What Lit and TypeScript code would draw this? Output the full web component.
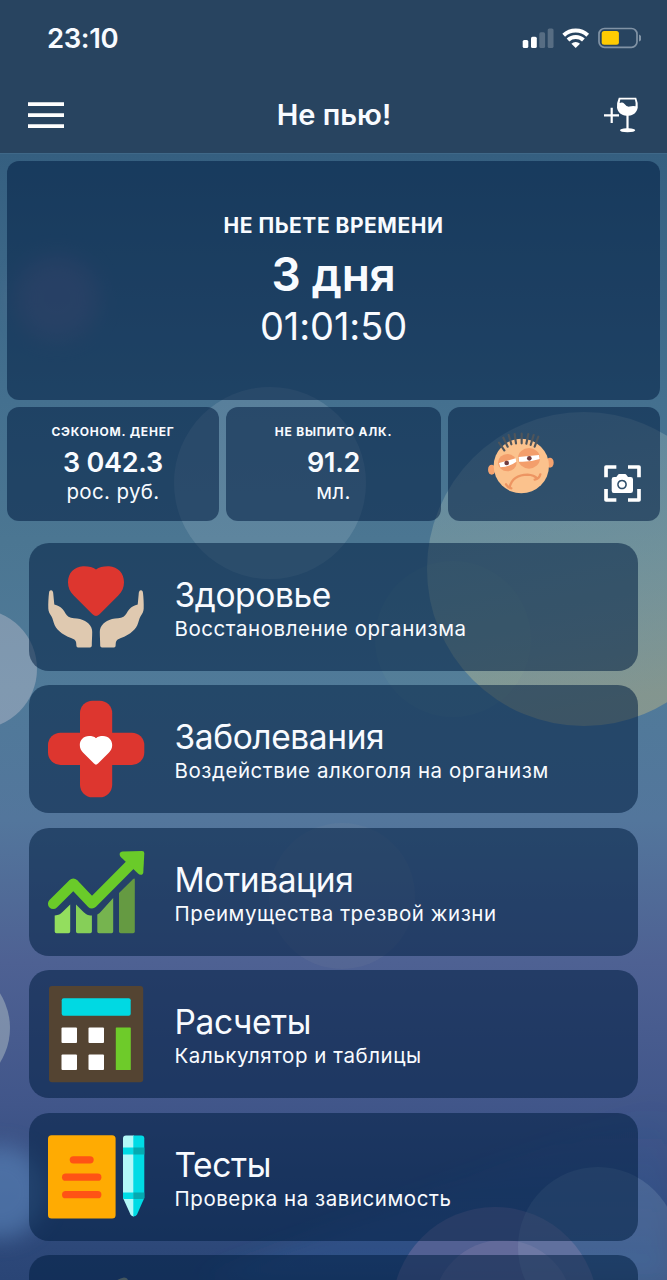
import { LitElement, html, svg, css } from "lit";
import { customElement, property } from "lit/decorators.js";

const hand =
  "M3 31.200C4.800 31.200 5.200 33 5.300 35L6.300 45.500C9.500 46.500 12.500 47.800 14.700 50.200C17 53 18 56 20.500 57.700C23.500 59.600 28 59 32 59.900C36 61 38.500 62.500 40.500 64.500C43 67 44.300 70 44.200 73C44.200 78 43.800 82 43.800 86.800Q43.700 88.400 42 88.400H30Q28.400 88.400 28.400 86.800C28.200 84 28.300 82 26.300 80.600C22 78.300 17.500 77 13.700 74.200C10.500 71.800 8.200 69.500 6.700 66.300C5.200 62.500 5 60 3.400 57.200C1.500 54.500 .4 52.500 .3 49.500C.1 44 .5 38.500 1 34C1.200 32.200 1.700 31.200 3 31.200Z";

const icons: Record<string, unknown> = {
  health: svg`
    <path fill="#dd362f" d="M48 10.500C51 8 56 7 61 7.200C70 7.700 76 14.200 76 23.200C76 28.700 74 32.700 70.500 36.200L51.500 55.200Q48 58.700 44.500 55.200L25.500 36.200C22 32.700 20 28.700 20 23.200C20 14.200 26 7.700 35 7.200C40 7 45 8 48 10.500Z"/>
    <path fill="#dfc9b0" d=${hand}/>
    <path fill="#dfc9b0" transform="matrix(-1 0 0 1 96 0)" d=${hand}/>`,
  disease: svg`
    <rect fill="#dd362f" x="32" y="-.3" width="32.200" height="96.600" rx="12.500"/>
    <rect fill="#dd362f" x="0" y="31.700" width="96.300" height="32.300" rx="12.500"/>
    <path fill="#fff" d="M48 37.200C50 35.400 52 35 55 35C60.500 35 64.200 39 64.200 44C64.200 47.500 63 49.500 60.800 51.700L50 62.500Q48 64.800 46 62.500L35.200 51.700C33 49.500 31.800 47.500 31.800 44C31.800 39 35.500 35 41 35C44 35 46 35.400 48 37.200Z"/>`,
  motivation: svg`
    <path fill="#93de5e" d="M6.700 71.500C11 71 12 70.500 14.500 68L22.200 60.500V87.500Q22.200 89.200 20.500 89.200H8.400Q6.700 89.200 6.700 87.500Z"/>
    <path fill="#86cf58" d="M28 60.500L35 67.500C38 70.500 39.500 71.300 43.900 71.500V87.500Q43.900 89.200 42.200 89.200H29.700Q28 89.200 28 87.500Z"/>
    <path fill="#76b44f" d="M49.300 70.500Q51.500 69.500 53 67.500L65.200 54V87.500Q65.200 89.200 63.500 89.200H51Q49.300 89.200 49.300 87.500Z"/>
    <path fill="#659a42" d="M71 49L85 35.200Q86.800 33.500 86.800 36V87.500Q86.800 89.200 85.100 89.200H72.700Q71 89.200 71 87.500Z"/>
    <path fill="none" stroke="#6acb29" stroke-width="10.500" stroke-linecap="round" stroke-linejoin="round" d="M5.200 59.800L25.300 39.700L44 59.300L86 17"/>
    <path fill="#6acb29" d="M74.500 7.500L94 7Q96.400 7 96.300 9.300L95.300 28.200C95 31.200 92 31.400 90 29.500L73.300 13.500C70.500 10.700 71.500 7.700 74.500 7.500Z"/>`,
  calc: svg`
    <rect x="1" y="0" width="94.200" height="96.200" rx="3" fill="#544432"/>
    <rect x="13.700" y="12.200" width="69" height="17.600" rx="2" fill="#00d9e3"/>
    <g fill="#fff"><rect x="13.500" y="41.400" width="15.500" height="15.600" rx="1"/><rect x="40.500" y="41.400" width="15.500" height="15.600" rx="1"/><rect x="13.500" y="68.600" width="15.500" height="15.500" rx="1"/><rect x="40.500" y="68.600" width="15.500" height="15.500" rx="1"/></g>
    <rect x="67.800" y="41.400" width="15" height="42.700" rx=".6" fill="#6ecb2a"/>`,
  tests: svg`
    <rect x="0" y="6.200" width="67.600" height="83.300" rx="3.500" fill="#ffab02"/>
    <g fill="#ff5315"><rect x="21.700" y="27.200" width="24" height="7.300" rx="3.650"/><rect x="14" y="44.500" width="39.400" height="7.300" rx="3.650"/><rect x="14" y="62" width="39.400" height="7.300" rx="3.650"/></g>
    <path fill="#b2f8f8" d="M86 6.500H78Q75 6.500 75 9.500V69L82.500 85.500Q83.500 87.500 86 87.500Z"/>
    <path fill="#00dbe5" d="M85.300 6.500H93.300Q96.300 6.500 96.300 9.500V69L89 85.500Q88 87.500 85.300 87.500Z"/>
    <path fill="#00dbe5" d="M75 18.600H85.300V25.500H75ZM75 63.600H85.300V70H75.500L75 69Z"/>
    <path fill="#05a9b0" d="M85.300 18.600H96.300V25.500H85.300ZM85.300 63.600H96.300V69L95.900 70H85.300Z"/>`,
  next: svg`<path fill="#44565f" d="M64 13Q69 8 76 6.500Q80 6.500 80 10V40H64Z"/>`,
};

@customElement("menu-card")
export class MenuCard extends LitElement {
  @property() icon = "";
  @property() heading = "";
  @property() note = "";
  static styles = css`
    :host { display: flex; box-sizing: border-box; height: 128px; padding: 16px 20px 16px 19.500px; gap: 30.500px; border-radius: 20px; background: rgba(0, 30, 64, 0.54); flex: none; overflow: hidden; }
    .icon { width: 96px; height: 96px; flex: none; overflow: visible; }
    .text { display: flex; flex-direction: column; padding-top: 14px; white-space: nowrap; }
    .heading { font-size: 33.500px; line-height: 44px; letter-spacing: -0.4px; }
    .note { font-size: 20.500px; line-height: 26px; letter-spacing: 0.55px; margin-top: -1px; }
  `;
  render() {
    return html`<svg class="icon" viewBox="0 0 96 96">${icons[this.icon]}</svg>
      <div class="text"><span class="heading">${this.heading}</span><span class="note">${this.note}</span></div>`;
  }
}

@customElement("app-root")
export class AppRoot extends LitElement {
  static styles = css`
    :host { display: block; position: relative; height: 1280px; overflow: hidden; color: #f8fbff; font-family: Inter, "Noto Sans", sans-serif;
      background: linear-gradient(#305b7c 0, #355f80 155px, #44708f 400px, #4b7692 540px, #507a99 690px, #53769c 820px, #4e6193 962px, #41568a 1105px, #2d4879 1247px, #2a4576 1280px); }
    .backdrop { position: absolute; inset: 0; width: 667px; height: 1280px; }
    .page { position: relative; display: flex; flex-direction: column; }
    header { box-sizing: border-box; height: 154px; background: #284460; border-bottom: 1px solid #3f6888; display: flex; flex-direction: column; }
    .status { height: 76px; display: flex; align-items: center; justify-content: space-between; padding: 0 26px 0 47px; box-sizing: border-box; }
    .clock { font-size: 27.500px; font-weight: 600; letter-spacing: -0.4px; }
    .signals { width: 120px; height: 22px; }
    .nav { height: 77px; display: grid; grid-template-columns: 80px 1fr 80px; align-items: center; padding: 0 27px 0 28px; }
    .burger { width: 36px; height: 26px; }
    .title { text-align: center; font-size: 29px; font-weight: 600; letter-spacing: 0; }
    .glass { width: 36px; height: 36px; justify-self: end; }
    .panel { background: rgba(0, 28, 64, 0.54); border-radius: 12px; display: flex; flex-direction: column; align-items: center; white-space: nowrap; box-sizing: border-box; }
    .timer { margin: 7px 7px 0; height: 239px; padding-top: 51px; }
    .label { font-size: 21px; line-height: 28px; font-weight: 700; letter-spacing: 0.5px; }
    .days { font-size: 46px; line-height: 60px; font-weight: 600; margin-top: 4px; letter-spacing: -0.3px; }
    .hours { font-size: 38px; line-height: 44px; letter-spacing: -0.1px; }
    .stats { display: grid; grid-template-columns: 212px 215px 212px; gap: 7px; padding: 7px 7px 0; }
    .stat { height: 114px; padding-top: 16px; }
    .cap { font-size: 12px; line-height: 18px; font-weight: 700; letter-spacing: 0.8px; }
    .value { font-size: 27px; line-height: 34px; font-weight: 600; margin-top: 5px; letter-spacing: -0.25px; }
    .unit { font-size: 20.500px; line-height: 24px; letter-spacing: 0.35px; margin-top: -0.500px; }
    .mood { flex-direction: row; align-items: flex-start; justify-content: space-between; padding: 24.500px 18px 0 38.700px; }
    .face { width: 68px; height: 63.300px; }
    .scan { width: 38.700px; height: 39.300px; margin-top: 32px; }
    .menu { display: flex; flex-direction: column; gap: 14.500px; padding: 21.500px 29px 0 28.500px; }
  `;

  backdrop() {
    return svg`
      <defs>
        <linearGradient id="sun" x1="0" y1="0" x2="0.2" y2="1"><stop offset="0" stop-color="#b8d2d4" stop-opacity=".22"/><stop offset=".55" stop-color="#c3cfb0" stop-opacity=".3"/><stop offset="1" stop-color="#d0bf80" stop-opacity=".4"/></linearGradient>
        <linearGradient id="dusk" x1="0" y1="0" x2="0" y2="1"><stop offset="0" stop-color="#3569b0" stop-opacity="0"/><stop offset="1" stop-color="#3569b0" stop-opacity=".28"/></linearGradient>
        <filter id="soft" x="-50%" y="-50%" width="200%" height="200%"><feGaussianBlur stdDeviation="11"/></filter>
      </defs>
      <path d="M667 1100V1280H200Z" fill="url(#dusk)" filter="url(#soft)"/>
      <circle cx="57" cy="298" r="42" fill="#78729c" opacity=".42" filter="url(#soft)"/>
      <circle cx="270" cy="483" r="96" fill="#fff" opacity=".11"/>
      <circle cx="584" cy="569" r="157" fill="url(#sun)"/>
      <circle cx="453" cy="639" r="78" fill="#b9d0a0" opacity=".05"/>
      <circle cx="-23" cy="669" r="60" fill="#d3cdd8" opacity=".37"/>
      <circle cx="-55" cy="1028" r="65" fill="#c4d2cf" opacity=".42"/>
      <circle cx="0" cy="1192" r="46" fill="#5a85bb" opacity=".6" filter="url(#soft)"/>
      <circle cx="342" cy="896" r="73" fill="#a8a0a0" opacity=".08"/>
      <circle cx="495" cy="1310" r="103" fill="#b08bb8" opacity=".28"/>
      <circle cx="503" cy="1310" r="70" fill="#c6a8c8" opacity=".14"/>
      <circle cx="598" cy="1247" r="80" fill="#9bb4cc" opacity=".2"/>`;
  }

  face() {
    return html`<svg class="face" viewBox="140 95 204 190">
      <ellipse cx="154" cy="208" rx="11" ry="15" fill="#f5a36f"/><ellipse cx="329" cy="187" rx="11" ry="15" fill="#f5a36f"/>
      <ellipse cx="243" cy="197" rx="83" ry="82" fill="#fbc28d"/>
      <ellipse cx="201" cy="187" rx="28" ry="26" fill="#f39e6b"/><ellipse cx="266" cy="174" rx="33" ry="31" fill="#f39e6b"/>
      <path d="M176 188L226 174L228 184Q207 200 180 201ZM235 170L296 164L298 176Q268 186 236 184Z" fill="#fff"/>
      <circle cx="199" cy="188" r="7" fill="#713c3e"/><circle cx="267" cy="174" r="7" fill="#713c3e"/>
      <path d="M208 260Q217 224 262 223Q281 224 291 235M197 252Q203 262 213 264M283 238Q297 236 300 222" fill="none" stroke="#ed9562" stroke-width="7" stroke-linecap="round"/>
      <path d="M192 150L176 127M202 139L189 112M213 132L205 104M227 129L223 101M244 129V100M258 130L264 101M271 134L280 104M283 139L294 109" fill="none" stroke="#4f555b" stroke-width="6.500" stroke-linecap="round"/>
    </svg>`;
  }

  render() {
    return html`
      <svg class="backdrop" viewBox="0 0 667 1280">${this.backdrop()}</svg>
      <div class="page">
        <header>
          <div class="status">
            <span class="clock">23:10</span>
            <svg class="signals" viewBox="0 0 120 22">
              <g fill="#fff"><rect x="1.700" y="13" width="5.600" height="8" rx="1.600"/><rect x="10" y="9.700" width="5.800" height="11.300" rx="1.600"/></g>
              <g fill="#fff" opacity=".22"><rect x="18.300" y="5.300" width="5.800" height="15.700" rx="1.600"/><rect x="26.700" y="1.500" width="5.800" height="19.500" rx="1.600"/></g>
              <g fill="none" stroke="#fff" stroke-width="4"><path d="M42.700 8.300A17.500 17.500 0 0 1 66.700 8.300"/><path d="M47 13A11.300 11.300 0 0 1 62.400 13"/></g>
              <path fill="#fff" d="M50.400 16.800A6.300 6.300 0 0 1 59 16.800L54.700 21Z"/>
              <rect x="78" y="1.500" width="38" height="18.800" rx="5.500" fill="none" stroke="#8193a5" stroke-width="1.700"/>
              <rect x="80.700" y="4" width="17.200" height="13.800" rx="2.500" fill="#ffcc02"/>
              <path fill="#8193a5" d="M118 7.500Q120.500 8.500 120.500 11T118 14.500Z"/>
            </svg>
          </div>
          <div class="nav">
            <svg class="burger" viewBox="0 0 36 26"><path stroke="#fff" stroke-width="3.800" d="M0 2.200H36M0 13.200H36M0 24.200H36"/></svg>
            <span class="title">Не пью!</span>
            <svg class="glass" viewBox="0 0 36 36">
              <path d="M0 18.300H15M7.700 10.800V26" stroke="#fff" stroke-width="2.200"/>
              <path fill="#fff" fill-rule="evenodd" d="M14.800 .7H32.200Q34.300 6 33.700 10.700C32.700 15.500 29.500 18.300 24.600 18.800V31.200Q31 31.700 31.200 33.300Q31 35.200 23.500 35.200T16 33.300Q16.200 31.700 22.400 31.200V18.800C17.500 18.300 14 15.500 13 10.700Q12.500 6 14.800 .7ZM16.300 2.600L15.600 6Q18.500 4.500 20.300 6.800Q22.500 10 25.500 9.600Q28.500 8.500 31.500 9.200Q32 6 30.900 2.600Z"/>
            </svg>
          </div>
        </header>
        <section class="panel timer">
          <span class="label">НЕ ПЬЕТЕ ВРЕМЕНИ</span>
          <span class="days">3 дня</span>
          <span class="hours">01:01:50</span>
        </section>
        <section class="stats">
          <div class="panel stat"><span class="cap">СЭКОНОМ. ДЕНЕГ</span><span class="value">3 042.3</span><span class="unit">рос. руб.</span></div>
          <div class="panel stat"><span class="cap">НЕ ВЫПИТО АЛК.</span><span class="value">91.2</span><span class="unit">мл.</span></div>
          <div class="panel stat mood">
            ${this.face()}
            <svg class="scan" viewBox="490 192 116 118">
              <path fill="none" stroke="#fff" stroke-width="11" stroke-linejoin="round" d="M499 232V201H530M565 201H598V232M598 267V300H565M530 300H499V267"/>
              <path fill="#fff" fill-rule="evenodd" d="M523 231H530L535 224Q536 222 539 222H556Q559 222 560 224L565 231H573Q580 231 580 238V272Q580 279 573 279H522Q516 279 516 272V238Q516 231 523 231ZM547 239A14.500 14.500 0 1 0 547.100 239ZM547 243.500A10 10 0 1 1 546.900 243.500Z"/>
            </svg>
          </div>
        </section>
        <nav class="menu">
          <menu-card icon="health" heading="Здоровье" note="Восстановление организма"></menu-card>
          <menu-card icon="disease" heading="Заболевания" note="Воздействие алкоголя на организм"></menu-card>
          <menu-card icon="motivation" heading="Мотивация" note="Преимущества трезвой жизни"></menu-card>
          <menu-card icon="calc" heading="Расчеты" note="Калькулятор и таблицы"></menu-card>
          <menu-card icon="tests" heading="Тесты" note="Проверка на зависимость"></menu-card>
          <menu-card icon="next"></menu-card>
        </nav>
      </div>`;
  }
}
